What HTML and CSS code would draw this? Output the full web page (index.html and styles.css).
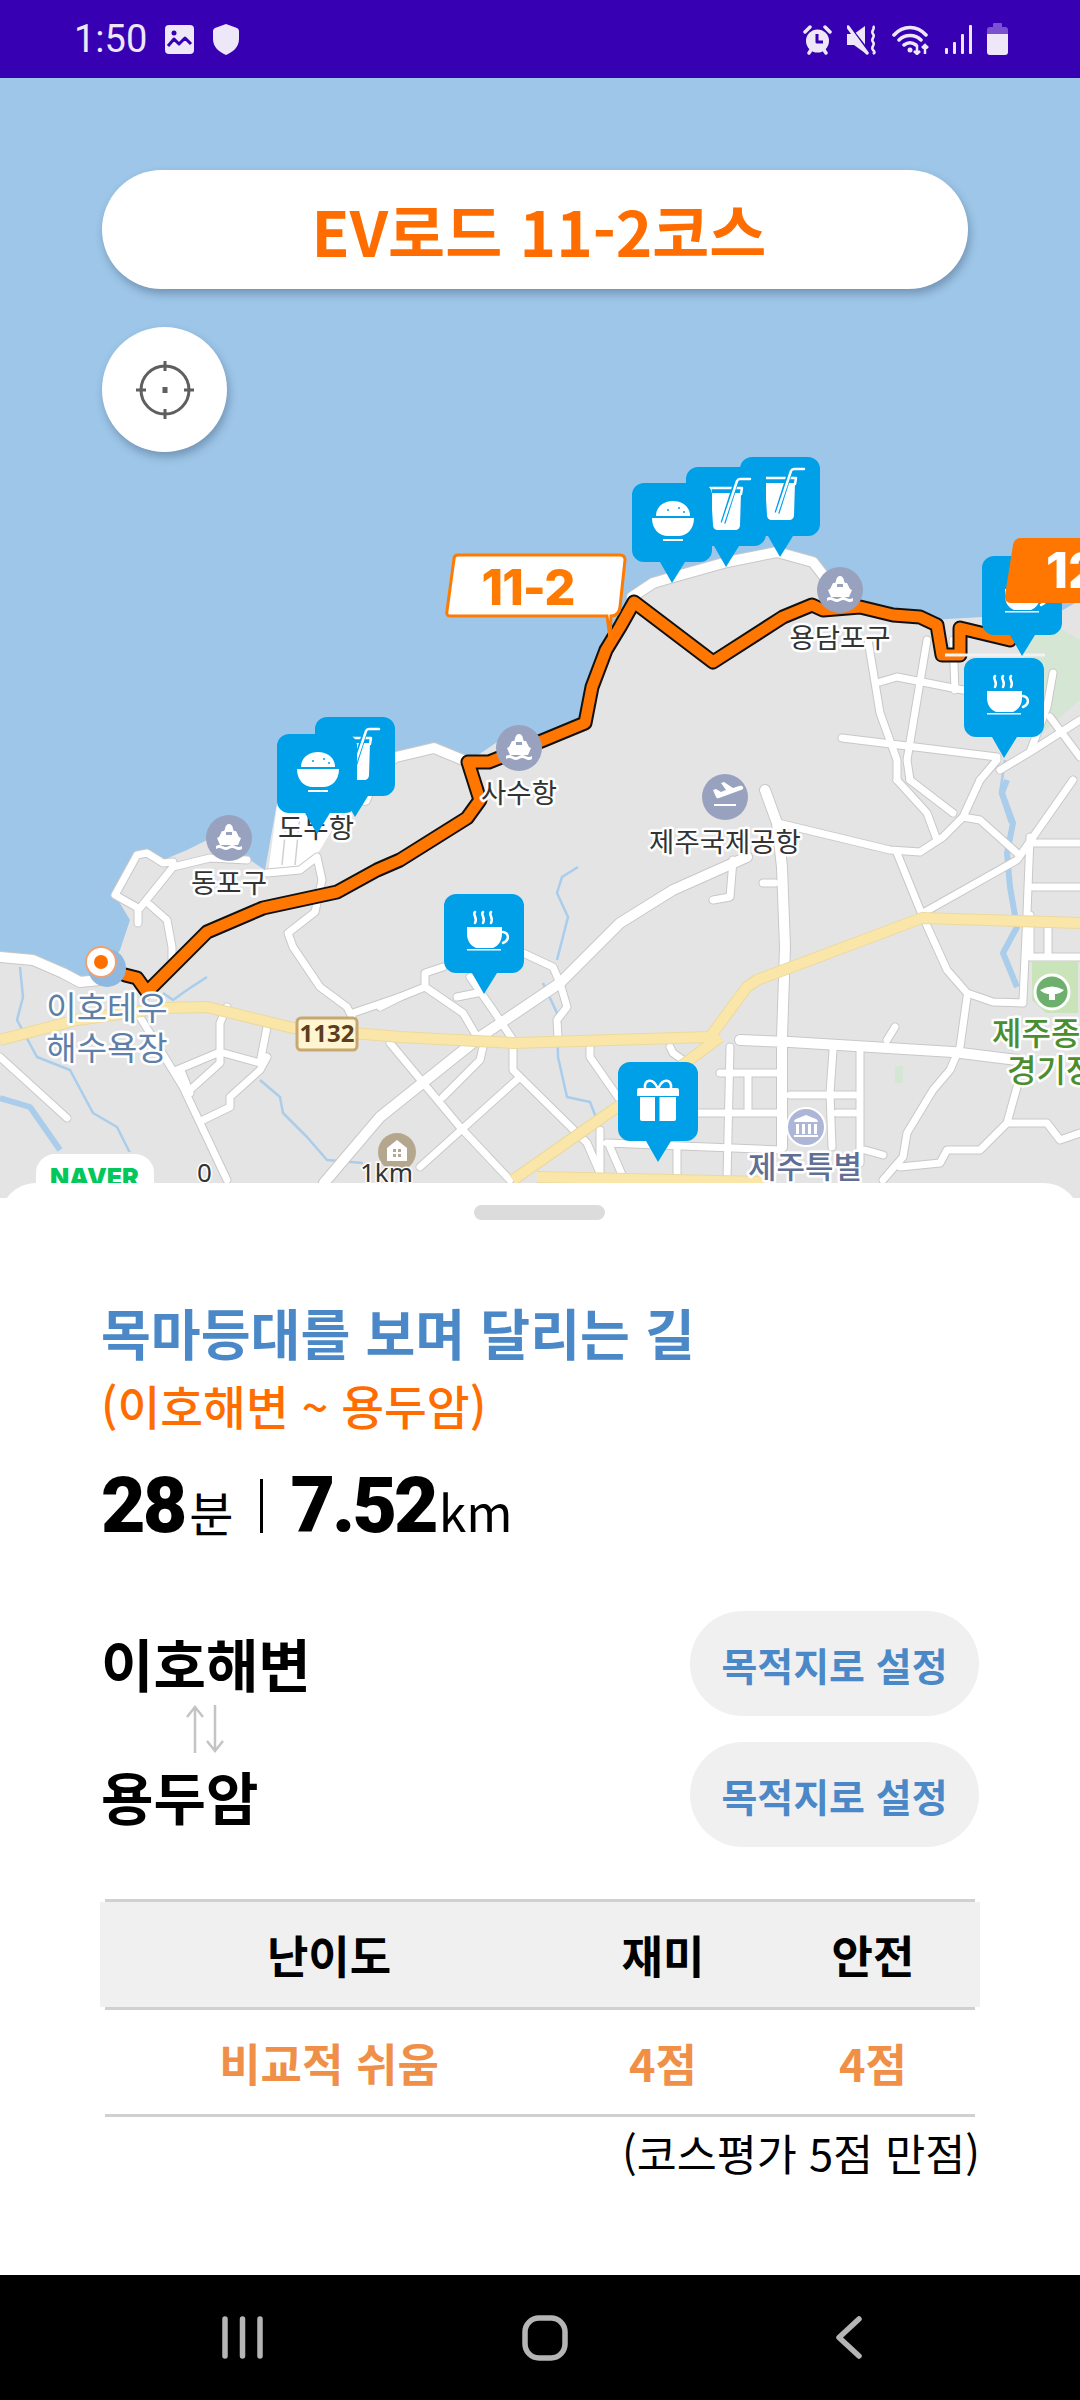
FILE: index.html
```html
<!DOCTYPE html>
<html lang="ko">
<head>
  <meta charset="UTF-8">
  <title>EV로드 11-2코스</title>
  <link rel="stylesheet" href="styles.css">
</head>
<body>

  <div class="status-bar">
    <div class="status-left">
      <span class="clock">1:50</span>
      <svg class="st-icon" width="29" height="29" viewBox="0 0 29 29">
        <rect width="29" height="29" rx="4"/>
        <circle class="st-hole" cx="9" cy="8" r="2.500"/>
        <path class="st-cut" d="M3 21l6-7 5 5 6-6 6 6"/>
      </svg>
      <svg class="st-icon" width="26" height="31" viewBox="0 0 26 31"><path d="M13 0l11 4q2 1 2 3v8c0 8-6 13-13 16C6 28 0 23 0 15V7q0-2 2-3z"/></svg>
    </div>
    <div class="status-right">
      <svg class="st-icon" width="29" height="31" viewBox="0 0 29 31">
        <circle cx="14.500" cy="17" r="11.500"/>
        <path class="st-cut" d="M14 10v8h6"/>
        <path class="st-line" d="M2 8l5-5M27 8l-5-5M6 29l2-3M23 29l-2-3"/>
      </svg>
      <svg class="st-icon" width="30" height="31" viewBox="0 0 30 31">
        <path d="M0 10h7L18 2v27L7 21H0z"/>
        <path class="st-cut" d="M0 0l21 27"/>
        <path class="st-line" d="M1 3l19 26"/>
        <path class="st-wave" d="M26 2c3 3-3 5 0 8s-3 5 0 8-3 5 0 8 1 3 0 4"/>
      </svg>
      <svg class="st-icon" width="38" height="31" viewBox="0 0 38 31">
        <path class="st-line" d="M2 11c9-10 23-10 32 0M7 16c6-6 16-6 22 0M12 21c4-3 8-3 12 0"/>
        <circle cx="18" cy="26" r="2.500"/>
        <path class="st-thin" d="M25 30V21M22 27l3 3 3-3M33 21v9M30 24l3-3 3 3"/>
      </svg>
      <svg class="st-icon" width="27" height="31" viewBox="0 0 27 31"><rect x="0" y="24" width="3" height="6" rx="1"/><rect x="8" y="18" width="3" height="12" rx="1"/><rect x="16" y="10" width="3" height="20" rx="1"/><rect x="24" y="1" width="3" height="29" rx="1"/></svg>
      <svg class="st-icon" width="21" height="32" viewBox="0 0 21 32"><path class="st-batt" d="M7 0h7q1 0 1 1v3h3a3 3 0 0 1 3 3v4H0V7a3 3 0 0 1 3-3h3V1q0-1 1-1z"/><path d="M0 11h21v18a3 3 0 0 1-3 3H3a3 3 0 0 1-3-3z"/></svg>
    </div>
  </div>

  <div class="map">
    <svg class="map-canvas" width="1080" height="1120" viewBox="0 78 1080 1120">
      <defs>
        <symbol id="pin" viewBox="0 0 80 100">
          <path d="M12 0h56a12 12 0 0 1 12 12v55a12 12 0 0 1-12 12H53l-13 21-12-21H12A12 12 0 0 1 0 67V12A12 12 0 0 1 12 0z"/>
        </symbol>
        <g id="ic-coffee">
          <path class="ic-fill" d="M23 33h35v7c0 7-4 12-9 14H32c-5-2-9-7-9-14z"/>
          <path class="ic-line" d="M59 38c6 1 7 8 0 11"/>
          <path class="ic-fill" d="M23 55h34v1.500H23z"/>
          <path class="ic-line" d="M31 18c-3 3 3 5 0 11M39 18c-3 3 3 5 0 11M47 18c-3 3 3 5 0 11"/>
        </g>
        <g id="ic-rice">
          <path class="ic-fill" d="M24 33c0-20 34-20 34 0z"/>
          <path class="ic-fill" d="M20 35h42c0 11-7 18-16 18H36c-9 0-16-7-16-18z"/>
          <rect class="ic-fill" x="31" y="56" width="20" height="2"/>
          <circle class="ic-hole" cx="36" cy="27" r="1"/>
          <circle class="ic-hole" cx="47" cy="25" r="1"/>
          <circle class="ic-hole" cx="52" cy="29" r="1"/>
        </g>
        <g id="ic-drink">
          <path class="ic-fill" d="M25 26h30l-1 32c0 3-2 5-5 5H32c-3 0-5-2-5-5z"/>
          <path class="ic-line" d="M24 21h31M24 21l1 6M56 21l-1 6"/>
          <path class="ic-cut" d="M37 56l14-44"/>
          <path class="ic-line" d="M37 56l14-42q1-2 3-2h10"/>
        </g>
        <g id="ic-gift">
          <path class="ic-fill" d="M22 35h15v24H24q-2 0-2-2zM41.500 35H58v22q0 2-2 2H41.500zM21 26h38q2 0 2 2v6H19v-6q0-2 2-2z"/>
          <path class="ic-line" d="M39 25c-4-9-13-8-12 1M41 25c4-9 13-8 12 1"/>
        </g>
        <g id="ic-ship">
          <path class="ic-fill" d="M0-14c2 0 4 2 4 5l1 2h2l3 6 2 1-3 7H-9l-3-7 2-1 3-6h2l1-2c0-3 2-5 4-5z"/>
          <path class="ic-fill" d="M-13 8q3-2 6.500 0t6.500 0 6.500 0 6.500 0v3q-3 2-6.500 0t-6.500 0-6.500 0-6.500 0z"/>
          <rect class="ic-window" x="-3" y="-6" width="6" height="3"/>
        </g>
        <g id="roads">
          <path d="M173 862L163 863 147 853 137 855 115 895 138 908 138 923M247 860L210 858 173 867 140 908M150 905L167 920 172 947 172 965"/>
          <path d="M267 873L300 870 317 857 322 880 315 912 288 933 293 947 320 987 347 1007 352 1017M353 1013L400 997"/>
          <path d="M140 1017L183 1087 227 1180M0 1057L67 1118M227 1007L220 1023 220 1063 190 1090M177 1070L220 1052 260 1063 267 1027M267 1057L260 1070 230 1097 230 1107 203 1120M182 1073L190 1093"/>
          <path d="M733 860L730 897 713 900M523 953L553 967 560 983 567 1007 557 1020 558 1037M443 967L425 973 425 987 400 997 380 1007M425 987L463 1013 477 1037M470 977L493 1010 513 1040M457 997L477 993"/>
          <path d="M483 1047L480 1060 443 1097M513 1047L513 1070 520 1077 587 1143 600 1173M390 1043L460 1127 510 1180M520 1077L420 1167M590 1047L590 1057 620 1100M670 1047L673 1053 683 1060"/>
          <path d="M730 1047L727 1180M720 1073H780M697 1113H780M607 1143L780 1150M677 1147V1177M600 1130V1173M610 1147L623 1177M748 1077V1108"/>
          <path d="M778 823L890 850 920 852 943 837 963 817 980 780M897 780L927 813 937 840M953 813L910 780M963 817L980 820 1017 853"/>
          <path d="M897 853L923 917 947 970 967 993 993 1002 1023 1003M923 913L1017 860 1073 780M1030 837L1027 913 1023 1000M1033 843H1080M1033 887H1080M1033 957H1080M1030 915V957M1048 927V957"/>
          <path d="M967 997L960 1047 950 1070 933 1090 907 1133 903 1157 883 1180M900 1167L940 1163 947 1150 980 1150 1007 1123 1047 1123 1060 1140 1080 1133M1017 1087L1007 1123M833 1050L830 1093 832 1147M860 1052V1163M790 1095H855M837 1113H855M865 1150L883 1155M887 1040L895 1027M763 883H775"/>
          <path d="M868 640L880 713 897 760 897 780M927 640L907 760 910 780M880 682L897 677 963 690M842 738L997 757M997 760L980 780M1030 752L1080 720M1050 717L1080 757M953 640L955 690M1053 673L1047 707 1030 752 1000 770"/>
        </g>
        <g id="roads-major">
          <path d="M747 857L673 890 620 923 560 983 480 1037 380 1117 324 1183"/>
          <path d="M765 790L777 823 782 867 785 947 782 1037 782 1147M740 1040L790 1042 953 1052 1017 1060"/>
          <path d="M0 957L33 960 63 973 80 982 100 980"/>
          <path d="M632 597L653 583 670 578 727 562 777 552 813 562 827 580"/>
          <path d="M396 757L434 748 468 762M365 800L378 768 396 757"/>
        </g>
        <g id="yellow">
          <path d="M0 1040L77 1020 163 1008 207 1007 293 1028 400 1037 513 1043 710 1037 747 987 757 980 922 918 1080 923"/>
          <path d="M720 1037L680 1067 613 1110 513 1180M537 1177L763 1182"/>
        </g>
      </defs>

      <rect class="water" x="0" y="78" width="1080" height="1120"/>
      <path class="land" d="M0 957L33 960 63 973 80 982 100 980 120 950 130 920 115 895 138 852 163 860 187 850 207 840 247 858 265 870 277 803 345 805 370 775 396 757 434 748 468 762 500 740 544 736 589 719 598 687 612 650 626 625 632 597 653 583 670 578 727 562 777 552 813 562 827 580 860 603 930 620 983 617 1063 610 1080 600V1198H0z"/>
      <path class="park" d="M1020 640L1060 628 1080 640V700L1040 735zM895 1066H903V1083H895z"/>
      <path class="pier" d="M277 806L345 808 320 850 300 870 268 873z"/>
      <path class="pier-line" d="M287 815L282 865M300 815L295 865"/>

      <g class="river">
        <path d="M1005 760L1000 793 1010 823M578 867L562 877 557 893 568 917 557 960M543 983L557 1013 558 1057 567 1097 590 1102 597 1120M20 967L23 997 17 1020 37 1057 70 1070 93 1113 117 1127 130 1153M260 1080L280 1097 283 1113 307 1137 327 1160 363 1163M207 977L187 990 173 1000 163 993"/>
        <path class="river-wide" d="M0 1098L30 1107 60 1150M1007 780L1002 793 1013 823 1007 853 1010 887 1017 927 1003 953 1017 987"/>
      </g>

      <use href="#roads" class="road-case"/>
      <use href="#roads-major" class="major-case"/>
      <use href="#roads" class="road"/>
      <use href="#roads-major" class="major"/>
      <use href="#yellow" class="yellow-case"/>
      <use href="#yellow" class="yellow"/>

      <path class="route-case" d="M125 975L137 978 147 992 207 932 263 908 337 892 377 870 400 860 467 818 480 800 468 762 489 762 544 740 585 723 592 687 606 650 620 627 634 602 713 662 783 617 812 605 823 610 860 607 893 615 920 617 937 625 942 655 960 655 960 628 1010 640"/>
      <path class="route" d="M125 975L137 978 147 992 207 932 263 908 337 892 377 870 400 860 467 818 480 800 468 762 489 762 544 740 585 723 592 687 606 650 620 627 634 602 713 662 783 617 812 605 823 610 860 607 893 615 920 617 937 625 942 655 960 655 960 628 1010 640"/>
      <path class="pier-bar" d="M945 655H1045"/>

      <!-- poi circles -->
      <circle class="poi" cx="840" cy="590" r="23"/><use href="#ic-ship" x="840" y="590"/>
      <circle class="poi" cx="519" cy="748" r="23"/><use href="#ic-ship" x="519" y="748"/>
      <circle class="poi" cx="229" cy="838" r="23"/><use href="#ic-ship" x="229" y="838"/>
      <circle class="poi" cx="725" cy="797" r="23"/>
      <path class="ic-fill" d="M713 790l3-1 5 3 5-2-5-7 3-1 9 6 6-2q3-1 4 1t-2 3l-22 8q-2 1-3-1zM714 804h22v2h-22z"/>
      <circle class="poi-light" cx="806" cy="1127" r="19"/>
      <path class="ic-fill" d="M794 1122q0-2 2-3l10-4 10 4q2 1 2 3zM796 1124h3v10h-3zM802 1124h3v10h-3zM808 1124h3v10h-3zM814 1124h3v10h-3zM794 1135h24v2h-24z"/>
      <circle class="poi-house" cx="397" cy="1152" r="19"/>
      <path class="ic-fill" d="M397 1140l10 8v13h-20v-13z"/>
      <path class="house-dots" d="M393 1149h3v3h-3zM398 1149h3v3h-3zM393 1154h3v3h-3zM398 1154h3v3h-3z"/>
      <path class="park-box" d="M1032 962H1078V1013H1046L1032 1000z"/>
      <circle class="park-ring" cx="1052" cy="992" r="17"/>
      <path class="ic-fill" d="M1040 990q12-7 24 0-4 4-9 4v6h-6v-6q-5 0-9-4z"/>
      <circle class="beach" cx="107" cy="968" r="19"/>

      <g class="map-label">
        <text x="840" y="648">용담포구</text>
        <text x="519" y="803">사수항</text>
        <text x="725" y="852">제주국제공항</text>
        <text x="229" y="893">동포구</text>
        <text x="316" y="838">도두항</text>
      </g>
      <g class="map-label-lg label-beach">
        <text x="107" y="1020">이호테우</text>
        <text x="107" y="1060">해수욕장</text>
      </g>
      <g class="map-label-lg label-park">
        <text x="992" y="1045">제주종</text>
        <text x="1007" y="1082">경기장</text>
      </g>
      <g class="map-label-lg label-civic">
        <text x="748" y="1178">제주특별</text>
      </g>

      <rect class="road-sign" x="297" y="1018" width="60" height="32" rx="4"/>
      <text class="road-sign-text" x="327" y="1042">1132</text>

      <!-- start pin -->
      <circle class="start-outer" cx="101" cy="962" r="15"/>
      <circle class="start-dot" cx="101" cy="962" r="7"/>

      <rect class="naver-box" x="35" y="1153" width="120" height="50" rx="20"/>
      <text class="naver" x="50" y="1186">NAVER</text>
      <text class="scale-text" x="197" y="1182">0</text>
      <text class="scale-text" x="360" y="1182">1km</text>

      <!-- course flags -->
      <path class="flag" d="M458 555H620q5 0 5 5l-5 47q-1 9-9 9l-1 22-3-22H450q-4 0-3-5l7-52q0-4 4-4z"/>
      <text class="flag-text" x="528" y="605">11-2</text>

      <!-- markers -->
      <use href="#pin" class="pin" x="315" y="717" width="80" height="100"/><use href="#ic-drink" x="315" y="717"/>
      <use href="#pin" class="pin" x="277" y="734" width="80" height="100"/><use href="#ic-rice" x="277" y="734"/>
      <use href="#pin" class="pin" x="444" y="894" width="80" height="100"/><use href="#ic-coffee" x="444" y="894"/>
      <use href="#pin" class="pin" x="618" y="1062" width="80" height="100"/><use href="#ic-gift" x="618" y="1062"/>
      <use href="#pin" class="pin" x="740" y="457" width="80" height="100"/><use href="#ic-drink" x="740" y="457"/>
      <use href="#pin" class="pin" x="686" y="467" width="80" height="100"/><use href="#ic-drink" x="686" y="467"/>
      <use href="#pin" class="pin" x="632" y="483" width="80" height="100"/><use href="#ic-rice" x="632" y="483"/>
      <use href="#pin" class="pin" x="982" y="556" width="80" height="100"/><use href="#ic-coffee" x="982" y="556"/>
      <use href="#pin" class="pin" x="964" y="658" width="80" height="100"/><use href="#ic-coffee" x="964" y="658"/>

      <path class="flag-solid" d="M1021 538H1090V603H1012q-8 0-7-8l8-50q1-7 8-7z"/>
      <text class="flag-solid-text" x="1046" y="588">12</text>
    </svg>

    <div class="course-title">EV로드 11-2코스</div>
    <div class="locate-btn">
      <svg width="60" height="60" viewBox="0 0 60 60">
        <circle class="target" cx="30" cy="30" r="24"/>
        <path class="target" d="M30 1v10M30 49v10M1 30h10M49 30h10"/>
        <rect class="target-dot" x="27.500" y="27" width="5" height="6"/>
      </svg>
    </div>
  </div>

  <div class="sheet">
    <div class="handle"></div>

    <div class="road-name">목마등대를 보며 달리는 길</div>
    <div class="road-range">(이호해변 ~ 용두암)</div>

    <div class="stats">
      <span class="num">28</span><span class="unit">분</span>
      <span class="divider"></span>
      <span class="num">7.52</span><span class="unit unit-km">km</span>
    </div>

    <div class="places">
      <div class="place-row">
        <span class="place-name">이호해변</span>
        <button class="dest-btn">목적지로 설정</button>
      </div>
      <svg class="swap" width="38" height="48" viewBox="0 0 38 48">
        <path d="M9 48V2M1 12L9 2l8 10M29 0v46M21 36l8 10 8-10"/>
      </svg>
      <div class="place-row">
        <span class="place-name">용두암</span>
        <button class="dest-btn">목적지로 설정</button>
      </div>
    </div>

    <div class="score-table">
      <div class="rule"></div>
      <div class="score-row score-head">
        <span>난이도</span><span>재미</span><span>안전</span>
      </div>
      <div class="rule"></div>
      <div class="score-row score-body">
        <span>비교적 쉬움</span><span>4점</span><span>4점</span>
      </div>
      <div class="rule"></div>
    </div>
    <div class="score-note">(코스평가 5점 만점)</div>
  </div>

  <div class="nav-bar">
    <svg width="41" height="43" viewBox="0 0 41 43"><path class="nav-line" d="M3 3v37M20.500 3v37M38 3v37"/></svg>
    <svg width="46" height="46" viewBox="0 0 46 46"><rect class="nav-line" x="3" y="3" width="40" height="40" rx="14"/></svg>
    <svg width="26" height="43" viewBox="0 0 26 43"><path class="nav-line" d="M23 3L3 21.500 23 40"/></svg>
  </div>

</body>
</html>
```

FILE: styles.css
```css
* { box-sizing: border-box; margin: 0; padding: 0; }
body {
  width: 1080px;
  height: 2400px;
  overflow: hidden;
  font-family: "Noto Sans CJK KR", "Noto Sans", sans-serif;
  background: #fff;
  display: flex;
  flex-direction: column;
}

/* status bar */
.status-bar {
  height: 78px;
  flex: none;
  background: #3700b3;
  display: flex;
  justify-content: space-between;
  align-items: center;
  padding: 0 72px 0 74px;
  color: #ede7f8;
}
.status-left, .status-right {
  display: flex;
  align-items: center;
}
.status-left { gap: 19px; }
.status-right { gap: 15px; }
.clock {
  font-family: Roboto, sans-serif;
  font-size: 38px;
  line-height: 1;
  margin-right: -1px;
}
.st-icon { fill: #ede7f8; }
.st-hole { fill: #3700b3; }
.st-cut { fill: none; stroke: #3700b3; stroke-width: 3; stroke-linejoin: round; }
.st-line { fill: none; stroke: #ede7f8; stroke-width: 3.500; stroke-linecap: round; }
.st-wave { fill: none; stroke: #ede7f8; stroke-width: 2.500; }
.st-thin { fill: none; stroke: #ede7f8; stroke-width: 2.500; }
.st-batt { fill: #7a52cf; }

/* map */
.map {
  position: relative;
  height: 1120px;
  flex: none;
}
.map-canvas { display: block; }
.water { fill: #9dc6e8; }
.land { fill: #e4e4e4; }
.park { fill: #d5e6d5; }
.pier { fill: #fff; }
.pier-line { fill: none; stroke: #d0d0d0; stroke-width: 1.500; }
.pier-bar { fill: none; stroke: #f2f2f2; stroke-width: 3; }
.river { fill: none; stroke: #a9cdeb; stroke-width: 2.500; stroke-linejoin: round; }
.river-wide { stroke-width: 6; }
.road-case { fill: none; stroke: #c8c8c8; stroke-width: 9; stroke-linejoin: round; stroke-linecap: round; }
.road { fill: none; stroke: #fff; stroke-width: 7; stroke-linejoin: round; stroke-linecap: round; }
.major-case { fill: none; stroke: #c8c8c8; stroke-width: 12; stroke-linejoin: round; stroke-linecap: round; }
.major { fill: none; stroke: #fff; stroke-width: 10; stroke-linejoin: round; stroke-linecap: round; }
.yellow-case { fill: none; stroke: #ecd9a0; stroke-width: 12; stroke-linejoin: round; }
.yellow { fill: none; stroke: #f9e6a8; stroke-width: 10; stroke-linejoin: round; }
.route-case { fill: none; stroke: #111; stroke-width: 15; stroke-linejoin: round; stroke-linecap: round; }
.route { fill: none; stroke: #ff7700; stroke-width: 11; stroke-linejoin: round; stroke-linecap: round; }
.poi { fill: #98a2be; }
.poi-light { fill: #aeb6d8; stroke: #fff; stroke-width: 2; }
.poi-house { fill: #b5a68e; }
.house-dots { fill: #b5a68e; }
.park-box { fill: #c8e4b8; }
.park-ring { fill: #6db06d; stroke: #fff; stroke-width: 3; }
.beach { fill: #8fb8e0; }
.start-outer { fill: #fff; stroke: #f0a070; stroke-width: 2; }
.start-dot { fill: #ff6f00; }

.map-label text, .map-label-lg text {
  font-family: "Noto Sans CJK KR", sans-serif;
  paint-order: stroke;
  stroke: #fff;
  stroke-width: 5px;
  stroke-linejoin: round;
}
.map-label text {
  font-size: 27.500px;
  fill: #333;
  text-anchor: middle;
}
.map-label-lg text {
  font-size: 32px;
}
.label-beach text { fill: #5e7fa8; text-anchor: middle; font-size: 33px; }
.label-park text { fill: #4a8f2f; font-weight: 500; }
.label-civic text { fill: #5f6f95; font-size: 31px; font-weight: 500; }

.road-sign { fill: #fff5d0; stroke: #c8a870; stroke-width: 3; }
.road-sign-text {
  font-family: "Noto Sans", sans-serif;
  font-weight: 700;
  font-size: 24px;
  fill: #5c3d1e;
  text-anchor: middle;
}
.naver-box { fill: #fff; stroke: #e4e4e4; stroke-width: 2; }
.naver {
  font-family: Inter, sans-serif;
  font-weight: 900;
  font-size: 25px;
  fill: #03c75a;
}
.scale-text {
  font-family: "Noto Sans", sans-serif;
  font-size: 26px;
  fill: #333;
  paint-order: stroke;
  stroke: #fff;
  stroke-width: 3px;
}

.flag { fill: #fff; stroke: #ff7a00; stroke-width: 3; }
.flag-text {
  font-family: Inter, sans-serif;
  font-weight: 800;
  font-size: 49px;
  letter-spacing: -1px;
  fill: #ff7a00;
  text-anchor: middle;
}
.flag-solid { fill: #ff7700; }
.flag-solid-text {
  font-family: Inter, sans-serif;
  font-weight: 800;
  font-size: 50px;
  fill: #fff;
}
.pin { fill: #00a0e9; }
.ic-fill { fill: #fff; }
.ic-hole { fill: #00a0e9; }
.ic-window { fill: #98a2be; }
.ic-line { fill: none; stroke: #fff; stroke-width: 2.500; stroke-linecap: round; }
.ic-cut { fill: none; stroke: #00a0e9; stroke-width: 5; }

.course-title {
  position: absolute;
  left: 102px;
  top: 92px;
  width: 866px;
  height: 119px;
  padding-left: 8px;
  border-radius: 60px;
  background: #fff;
  box-shadow: 2px 5px 8px rgba(40, 60, 90, 0.35);
  color: #ff6d00;
  font-size: 62px;
  font-weight: 700;
  display: flex;
  align-items: center;
  justify-content: center;
}
.locate-btn {
  position: absolute;
  left: 102px;
  top: 249px;
  width: 125px;
  height: 125px;
  border-radius: 50%;
  background: #fff;
  box-shadow: 2px 5px 8px rgba(40, 60, 90, 0.35);
  display: flex;
  align-items: center;
  justify-content: center;
}
.target { fill: none; stroke: #5f5f5f; stroke-width: 3; }
.target-dot { fill: #5f5f5f; }

/* bottom sheet */
.sheet {
  height: 1092px;
  flex: none;
  margin-top: -15px;
  position: relative;
  background: #fff;
  border-radius: 36px 36px 0 0;
  padding: 22px 101px 0 101px;
}
.handle {
  width: 131px;
  height: 15px;
  border-radius: 8px;
  background: #dcdcdc;
  margin: 0 auto 77px;
  transform: translateX(-1px);
}
.road-name {
  color: #4a88c7;
  font-size: 54.200px;
  font-weight: 700;
  line-height: 70px;
}
.road-range {
  color: #ff6d00;
  font-size: 46.500px;
  font-weight: 500;
  line-height: 60px;
  margin-top: 8px;
}
.stats {
  display: flex;
  align-items: baseline;
  margin-top: 26px;
  height: 90px;
}
.num {
  font-family: Roboto, sans-serif;
  font-weight: 900;
  font-size: 77px;
  line-height: 90px;
  letter-spacing: -3px;
}
.unit {
  font-size: 48px;
  margin-left: 5px;
}
.unit-km {
  font-size: 50px;
  margin-left: 3px;
}
.divider {
  width: 3px;
  height: 54px;
  background: #000;
  margin: 0 27px 0 27px;
  align-self: center;
}
.places { margin-top: 60px; }
.place-row {
  display: flex;
  justify-content: space-between;
  align-items: center;
  height: 105px;
}
.place-row + .swap + .place-row { margin-top: -11px; }
.place-row:first-child .place-name { margin-bottom: 4px; }
.place-name {
  font-size: 57px;
  font-weight: 700;
}
.dest-btn {
  width: 289px;
  height: 105px;
  border: none;
  border-radius: 53px;
  background: #f0f0f0;
  color: #4a88c7;
  font-family: inherit;
  font-size: 39px;
  font-weight: 700;
}
.swap {
  display: block;
  margin: -11px 0 0 85px;
  fill: none;
  stroke: #c4c4c4;
  stroke-width: 2.500;
}
.score-table {
  margin-top: 52px;
  margin-left: -1px;
  margin-right: -1px;
}
.rule {
  height: 3px;
  margin: 0 5px;
  background: #d0d0d0;
}
.score-row {
  display: grid;
  grid-template-columns: 458px 210px 210px;
  align-items: center;
  text-align: center;
  font-size: 45px;
  font-weight: 700;
}
.score-head {
  height: 105px;
  background: #f0f0f0;
}
.score-body {
  height: 104px;
  color: #f09048;
}
.score-note {
  text-align: right;
  font-size: 43.500px;
  line-height: 60px;
  margin-top: 6px;
  margin-right: -1px;
}

/* nav */
.nav-bar {
  height: 125px;
  flex: none;
  background: #000;
  display: grid;
  grid-template-columns: 222px 41px 259px 46px 268px 26px;
  align-items: center;
}
.nav-bar svg:nth-child(1) { grid-column: 2; }
.nav-bar svg:nth-child(2) { grid-column: 4; }
.nav-bar svg:nth-child(3) { grid-column: 6; }
.nav-line { fill: none; stroke: #b5b5b5; stroke-width: 5.500; stroke-linecap: round; stroke-linejoin: round; }
```
